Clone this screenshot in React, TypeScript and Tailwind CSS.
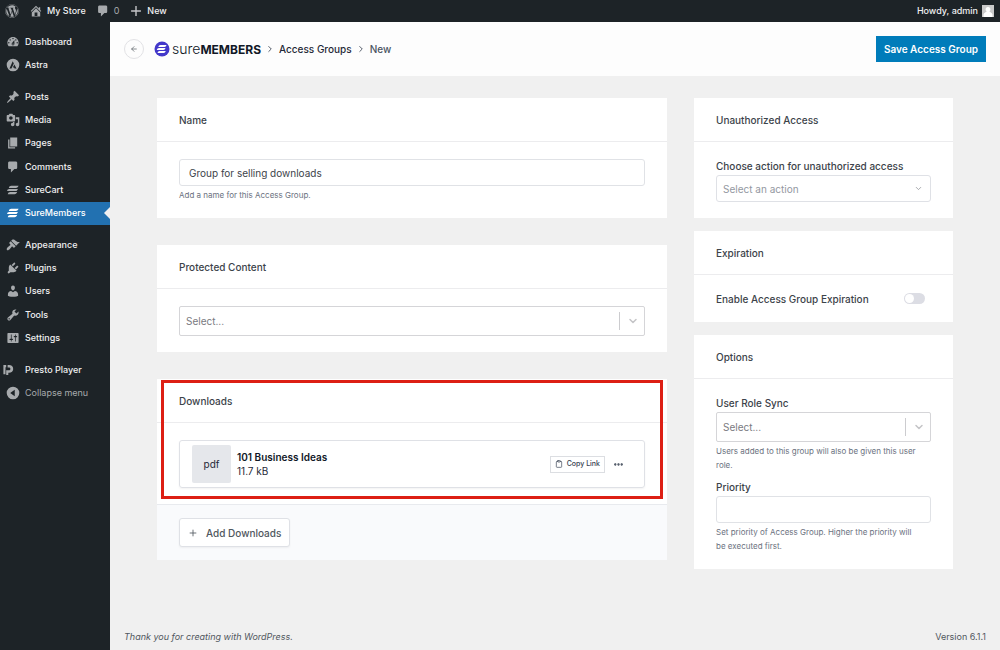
import type { ReactNode } from "react";
import { ArrowLeft, ChevronDown, ChevronRight, Clipboard, Ellipsis, Plus } from "lucide-react";
import { FaWordpress } from "react-icons/fa";

const icons = {
  home: "M16 8.5l1.53 1.53-1.06 1.06L10 4.6l-6.47 6.49-1.06-1.06L10 2.5l4 4v-2h2v4zm-6-2.46l6 5.99V18H4v-5.97zM12 17v-5H8v5h4z",
  comments: "M5 2h9c1.1 0 2 .9 2 2v7c0 1.1-.9 2-2 2h-2l-5 5v-5H5c-1.1 0-2-.9-2-2V4c0-1.1.9-2 2-2z",
  plus: "M17 9v2h-6v6H9v-6H3V9h6V3h2v6h6z",
  dashboard:
    "M3.76 16h12.48c1.1-1.37 1.76-3.11 1.76-5 0-4.42-3.58-8-8-8s-8 3.58-8 8c0 1.89.66 3.63 1.76 5zM10 4c.55 0 1 .45 1 1s-.45 1-1 1-1-.45-1-1 .45-1 1-1zM6 6c.55 0 1 .45 1 1s-.45 1-1 1-1-.45-1-1 .45-1 1-1zm8 0c.55 0 1 .45 1 1s-.45 1-1 1-1-.45-1-1 .45-1 1-1zm-5.37 5.55L12 7v6c0 1.1-.9 2-2 2s-2-.9-2-2c0-.57.24-1.08.63-1.45zM4 10c.55 0 1 .45 1 1s-.45 1-1 1-1-.45-1-1 .45-1 1-1zm12 0c.55 0 1 .45 1 1s-.45 1-1 1-1-.45-1-1 .45-1 1-1zm-5 3c0-.55-.45-1-1-1s-1 .45-1 1 .45 1 1 1 1-.45 1-1z",
  astra:
    "M10 1a9 9 0 1 0 0 18a9 9 0 0 0 0-18zM9.6 4.8l1.6 3.2-3.4 6.9H5L9.6 4.8zM11.9 9.2l3.1 5.7h-2.8l-.7-1.5H9.7l2.2-4.2z",
  post: "M10.44 3.02l1.82-1.82 6.36 6.35-1.83 1.82c-1.05-.68-2.48-.57-3.41.36l-.75.75c-.92.93-1.04 2.35-.35 3.41l-1.83 1.82-2.41-2.41-2.8 2.79c-.42.42-3.38 2.71-3.8 2.29s1.86-3.39 2.28-3.81l2.79-2.79L4.1 9.36l1.83-1.82c1.05.69 2.48.57 3.4-.36l.75-.75c.93-.92 1.05-2.35.36-3.41z",
  media:
    "M13 11V4c0-.55-.45-1-1-1h-1.67L9 1H5L3.67 3H2c-.55 0-1 .45-1 1v7c0 .55.45 1 1 1h10c.55 0 1-.45 1-1zM7 4.5c1.38 0 2.5 1.12 2.5 2.5S8.38 9.5 7 9.5 4.5 8.38 4.5 7 5.62 4.5 7 4.5zM14 6h5v10.5c0 1.38-1.12 2.5-2.5 2.5S14 17.88 14 16.5s1.12-2.5 2.5-2.5c.17 0 .34.02.5.05V9h-3V6zm-4 8.05V13h2v3.5c0 1.38-1.12 2.5-2.5 2.5S7 17.88 7 16.5 8.12 14 9.5 14c.17 0 .34.02.5.05z",
  page: "M6 15V2h10v13H6zm-1 1h8v2H3V5h2v11z",
  sure: "M7.5 4H18c-.6 1.8-1.8 3-4 3H4c.5-1.8 1.6-3 3.5-3zM4.5 8.5H17c-.5 1.8-1.6 3-3.5 3H1.5c.4-1.8 1.2-3 3-3zM6 13h10c-.6 1.8-1.8 3-4 3H2.5c.5-1.8 1.6-3 3.5-3z",
  appearance:
    "M14.48 11.06L7.41 3.99l1.5-1.5c.5-.56 2.3-.47 3.51.32 1.21.8 1.43 1.28 2.91 2.1 1.18.64 2.45 1.26 4.45.85zm-.71.71L6.7 4.7 4.93 6.47c-.39.39-.39 1.02 0 1.41l1.06 1.06c.39.39.39 1.03 0 1.42-.6.6-1.43 1.11-2.21 1.69-.35.26-.7.53-1.01.84C1.43 14.23.4 16.08 1.4 17.07c.99 1 2.84-.03 4.18-1.36.31-.31.58-.66.85-1.02.57-.78 1.08-1.61 1.69-2.21.39-.39 1.02-.39 1.41 0l1.06 1.06c.39.39 1.02.39 1.41 0z",
  plugins:
    "M13.11 4.36L9.87 7.6 8 5.73l3.24-3.24c.35-.34 1.05-.2 1.56.32.52.51.66 1.21.31 1.55zm-8 1.77l.91-1.12 9.01 9.01-1.19.84c-.71.71-2.63 1.16-3.82 1.16H6.14L4.9 17.26c-.59.59-1.54.59-2.12 0-.59-.58-.59-1.53 0-2.12l1.24-1.24v-3.88c0-1.13.4-3.19 1.09-3.89zm7.26 3.97l3.24-3.24c.34-.35 1.04-.21 1.55.31.52.51.66 1.21.31 1.55l-3.24 3.25z",
  users:
    "M10 9.25c-2.27 0-2.73-3.44-2.73-3.44C7 4.02 7.82 2 9.97 2c2.16 0 2.98 2.02 2.71 3.81 0 0-.41 3.44-2.68 3.44zm0 2.57L12.72 10c2.39 0 4.52 2.33 4.52 4.53v2.49s-3.65 1.13-7.24 1.13c-3.65 0-7.24-1.13-7.24-1.13v-2.49c0-2.25 1.94-4.48 4.47-4.48z",
  tools:
    "M16.68 9.77c-1.34 1.34-3.3 1.67-4.95.99l-5.41 6.52c-.99.99-2.59.99-3.58 0s-.99-2.59 0-3.57l6.52-5.42c-.68-1.65-.35-3.61.99-4.95 1.28-1.28 3.12-1.62 4.72-1.06l-2.89 2.89 2.82 2.82 2.86-2.87c.53 1.58.18 3.39-1.08 4.65zM3.81 16.21c.4.39 1.04.39 1.43 0 .4-.4.4-1.04 0-1.43-.39-.4-1.03-.4-1.43 0-.39.39-.39 1.03 0 1.43z",
  settings:
    "M18 16V4c0-.55-.45-1-1-1H3c-.55 0-1 .45-1 1v12c0 .55.45 1 1 1h14c.55 0 1-.45 1-1zM8 11h1c.55 0 1 .45 1 1s-.45 1-1 1H8v1.5c0 .28-.22.5-.5.5s-.5-.22-.5-.5V13H6c-.55 0-1-.45-1-1s.45-1 1-1h1V5.5c0-.28.22-.5.5-.5s.5.22.5.5V11zm5-2h-1c-.55 0-1-.45-1-1s.45-1 1-1h1V5.5c0-.28.22-.5.5-.5s.5.22.5.5V7h1c.55 0 1 .45 1 1s-.45 1-1 1h-1v5.5c0 .28-.22.5-.5.5s-.5-.22-.5-.5V9z",
  presto:
    "M2 3h4v3H5v10H2V3zM8 3h2c3.5 0 6 2.300 6 5.500S13.500 14 10 14H9v3H6v-6.500h4c1.200 0 2-.8 2-2s-.8-2-2-2H8V3z",
  collapse: "M10 1a9 9 0 1 0 0 18a9 9 0 0 0 0-18zM12.5 5.5v9L6 10l6.5-4.5z",
};

type IconName = keyof typeof icons;

const Icon = ({ name, className }: { name: IconName; className?: string }) => (
  <svg viewBox="0 0 20 20" className={className} fill="currentColor" fillRule="evenodd" aria-hidden="true">
    <path d={icons[name]} />
  </svg>
);

const menu: { rows: string; items: [string, IconName][] }[] = [
  { rows: "h-[47px]", items: [["Dashboard", "dashboard"], ["Astra", "astra"]] },
  {
    rows: "h-[140px]",
    items: [
      ["Posts", "post"],
      ["Media", "media"],
      ["Pages", "page"],
      ["Comments", "comments"],
      ["SureCart", "sure"],
      ["SureMembers", "sure"],
    ],
  },
  {
    rows: "h-[117px]",
    items: [
      ["Appearance", "appearance"],
      ["Plugins", "plugins"],
      ["Users", "users"],
      ["Tools", "tools"],
      ["Settings", "settings"],
    ],
  },
  { rows: "h-[47px]", items: [["Presto Player", "presto"], ["Collapse menu", "collapse"]] },
];

const MenuItem = ({ label, icon }: { label: string; icon: IconName }) => {
  const iconClass = `h-3.5 w-3.5 shrink-0 ${icon === "presto" ? "-ml-1 mr-1" : ""}`;
  if (label === "Collapse menu") {
    return (
      <button type="button" className="flex items-center gap-[5px] pl-1.5 text-[#a7aaad]">
        <Icon name={icon} className={iconClass} />
        {label}
      </button>
    );
  }
  if (label === "SureMembers") {
    return (
      <a href="#members" className="relative flex items-center gap-[5px] bg-[#2271b1] pl-1.5 font-medium text-white">
        <Icon name={icon} className={iconClass} />
        {label}
        <span className="absolute right-0 border-y-6 border-r-6 border-y-transparent border-r-[#f0f0f1]" />
      </a>
    );
  }
  return (
    <a href="#menu" className="flex items-center gap-[5px] pl-1.5 font-medium text-[#f0f0f1]">
      <Icon name={icon} className={`${iconClass} text-[#a7aaad]`} />
      {label}
    </a>
  );
};

const Card = ({ title, children }: { title: string; children: ReactNode }) => (
  <section className="relative bg-white">
    <h2 className="flex h-11 items-center border-b border-[#ececee] px-[22px] font-medium text-[#3c434a]">{title}</h2>
    {children}
  </section>
);

const Help = ({ children }: { children: ReactNode }) => (
  <p className="text-[8px] leading-[14px] text-[#6b7280]">{children}</p>
);

const SearchSelect = ({ id, label }: { id: string; label: string }) => (
  <div className="relative">
    <select
      id={id}
      aria-label={label}
      className="block h-[30px] w-full appearance-none rounded-xs border border-[#d5d5d8] bg-white px-1.5 text-[#7a7a7f]"
    >
      <option>Select...</option>
    </select>
    <span className="pointer-events-none absolute inset-y-1.5 right-0 flex w-[26px] items-center justify-center border-l border-[#cccccf]">
      <ChevronDown size={12} strokeWidth={3} className="text-[#c4c4c7]" />
    </span>
  </div>
);

const App = () => {
  return (
    <div className="flex min-h-screen flex-col bg-[#f0f0f0] font-['Inter',sans-serif] text-[10px] leading-[14px]">
      <header className="flex h-[22px] items-center bg-[#1d2327] pr-1.5 pl-[5px] text-[9px] font-medium text-[#f0f0f1]">
        <FaWordpress size={14} className="mr-2.5 text-[#a7aaad]" />
        <a href="#store" className="mr-2.5 flex items-center gap-1">
          <Icon name="home" className="h-3.5 w-3.5 text-[#a7aaad]" />
          My Store
        </a>
        <a href="#comments" className="mr-2.5 flex items-center gap-1 font-normal text-[#a7aaad]">
          <Icon name="comments" className="h-3.5 w-3.5" />0
        </a>
        <a href="#new" className="flex items-center gap-1">
          <Icon name="plus" className="h-3.5 w-3.5 text-[#c3c4c7]" />
          New
        </a>
        <a href="#profile" className="ml-auto flex items-center gap-1">
          Howdy, admin
          <svg viewBox="0 0 12 12" className="h-3 w-3 bg-[#c9c9c9]" aria-hidden="true">
            <path d="M6 2a2.3 2.3 0 0 1 1.3 4.3c.2.9 2.7 1.2 3.2 3.2V12h-9V9.500c.5-2 3-2.300 3.200-3.200A2.300 2.300 0 0 1 6 2z" fill="#fff" />
          </svg>
        </a>
      </header>

      <div className="flex flex-1">
        <nav className="flex w-[110px] shrink-0 flex-col gap-2 bg-[#1d2327] pt-2 text-[9px]">
          {menu.map((group) => (
            <div key={group.items[0][0]} className={`grid auto-rows-fr ${group.rows}`}>
              {group.items.map(([label, icon]) => (
                <MenuItem key={label} label={label} icon={icon} />
              ))}
            </div>
          ))}
        </nav>

        <div className="flex min-w-0 flex-1 flex-col">
          <div className="flex h-[54px] items-center bg-[#fdfdfd] px-3.5">
            <button
              type="button"
              aria-label="Back"
              className="mr-2.5 flex h-5 w-5 items-center justify-center rounded-full border border-[#e2e2e5] text-[#50575e]"
            >
              <ArrowLeft size={8} />
            </button>
            <svg viewBox="0 0 16 16" className="mr-0.5 h-4 w-4" aria-hidden="true">
              <circle cx="8" cy="8" r="7.5" fill="#4338ca" />
              <path
                d="M6.5 4h6c-.3 1.200-1 2-2.200 2h-6c.3-1.200 1-2 2.200-2zM5 7h6.500c-.3 1.200-1 2-2.200 2H2.800c.3-1.200 1-2 2.200-2zM5.700 10h6c-.3 1.200-1 2-2.200 2h-6c.3-1.200 1-2 2.200-2z"
                fill="#fff"
              />
            </svg>
            <span className="flex items-baseline text-[#111827]">
              <span className="text-sm font-light">sure</span>
              <span className="text-xs font-bold">MEMBERS</span>
            </span>
            <ChevronRight size={10} className="mx-1 text-[#374151]" />
            <a href="#groups" className="font-medium text-[#1f2937]">
              Access Groups
            </a>
            <ChevronRight size={10} className="mx-1 text-[#374151]" />
            <span className="font-medium text-[#4b5563]">New</span>
            <button type="button" className="ml-auto h-[26px] bg-[#007cba] px-2 font-semibold text-white">
              Save Access Group
            </button>
          </div>

          <main className="grid grid-cols-[minmax(0,1fr)_259px] items-start gap-[27px] px-[47px] pt-[22px]">
            <div className="flex flex-col gap-[27px]">
              <Card title="Name">
                <div className="px-[22px] pt-[17px] pb-4">
                  <input
                    type="text"
                    aria-label="Name"
                    defaultValue="Group for selling downloads"
                    className="mb-0.5 block h-[27px] w-full rounded-[3px] border border-[#e0e2e6] px-[9px] text-[#3c434a]"
                  />
                  <Help>Add a name for this Access Group.</Help>
                </div>
              </Card>

              <Card title="Protected Content">
                <div className="px-[22px] pt-[17px] pb-4">
                  <SearchSelect id="content" label="Protected Content" />
                </div>
              </Card>

              <Card title="Downloads">
                <div className="px-[22px] pt-[17px] pb-4">
                  <div className="flex h-12 items-center rounded-[3px] border border-[#dfe1e6] pr-5 pl-3 shadow-xs">
                    <span className="mr-1.5 flex h-[38px] w-[39px] items-center justify-center rounded-xs bg-[#e5e7eb] text-[#1f2937]">
                      pdf
                    </span>
                    <span className="flex flex-col text-[#1f2937]">
                      <span className="font-semibold text-[#111827]">101 Business Ideas</span>
                      11.7 kB
                    </span>
                    <button
                      type="button"
                      className="mr-2 ml-auto flex h-[17px] items-center gap-1 border border-[#dcdee2] px-1 text-[7px] font-medium text-[#374151]"
                    >
                      <Clipboard size={8} />
                      Copy Link
                    </button>
                    <button type="button" aria-label="More">
                      <Ellipsis size={11} strokeWidth={3} className="text-[#374151]" />
                    </button>
                  </div>
                </div>
                <div className="border-t border-[#e8eaee] bg-[#f9fafc] px-[22px] py-[13px]">
                  <button
                    type="button"
                    className="flex h-[29px] items-center gap-2 rounded-[3px] border border-[#dfe1e6] bg-white px-2 font-medium text-[#50575e] shadow-xs"
                  >
                    <Plus size={10} />
                    Add Downloads
                  </button>
                </div>
                <div className="pointer-events-none absolute inset-x-1 top-px h-[119px] border-3 border-[#dd1f14]" />
              </Card>
            </div>

            <div className="flex flex-col gap-[13px]">
              <Card title="Unauthorized Access">
                <div className="px-[22px] pt-[17px] pb-4">
                  <label htmlFor="action" className="mb-0.5 block font-medium text-[#3c434a]">
                    Choose action for unauthorized access
                  </label>
                  <div className="relative">
                    <select
                      id="action"
                      className="block h-[27px] w-full appearance-none rounded-[3px] border border-[#dfe1e6] bg-white px-1.5 text-[#9398a1]"
                    >
                      <option>Select an action</option>
                    </select>
                    <ChevronDown size={9} className="pointer-events-none absolute top-[9px] right-2 text-[#8c8f94]" />
                  </div>
                </div>
              </Card>

              <Card title="Expiration">
                <div className="flex h-[47px] items-center justify-between pr-7 pl-[22px]">
                  <label htmlFor="expiration" className="font-medium text-[#3c434a]">
                    Enable Access Group Expiration
                  </label>
                  <input
                    id="expiration"
                    type="checkbox"
                    role="switch"
                    className="h-[11px] w-[21px] appearance-none rounded-full bg-[#dcdde4] p-px before:block before:h-[9px] before:w-[9px] before:rounded-full before:bg-white checked:bg-[#007cba] checked:before:ml-auto"
                  />
                </div>
              </Card>

              <Card title="Options">
                <div className="px-[22px] pt-[17px] pb-4">
                  <label htmlFor="role" className="mb-0.5 block font-medium text-[#3c434a]">
                    User Role Sync
                  </label>
                  <SearchSelect id="role" label="User Role Sync" />
                  <div className="mt-0.5 mb-2">
                    <Help>
                      Users added to this group will also be given this user
                      <br />
                      role.
                    </Help>
                  </div>
                  <label htmlFor="priority" className="mb-0.5 block font-medium text-[#3c434a]">
                    Priority
                  </label>
                  <input
                    id="priority"
                    type="text"
                    className="mb-0.5 block h-[27px] w-full rounded-[3px] border border-[#e0e2e6] px-[9px]"
                  />
                  <Help>
                    Set priority of Access Group. Higher the priority will
                    <br />
                    be executed first.
                  </Help>
                </div>
              </Card>
            </div>
          </main>

          <footer className="mt-auto flex justify-between px-3.5 pb-1.5 text-[9px] text-[#50575e]">
            <em>Thank you for creating with WordPress.</em>
            <span>Version 6.1.1</span>
          </footer>
        </div>
      </div>
    </div>
  );
};

export default App;
